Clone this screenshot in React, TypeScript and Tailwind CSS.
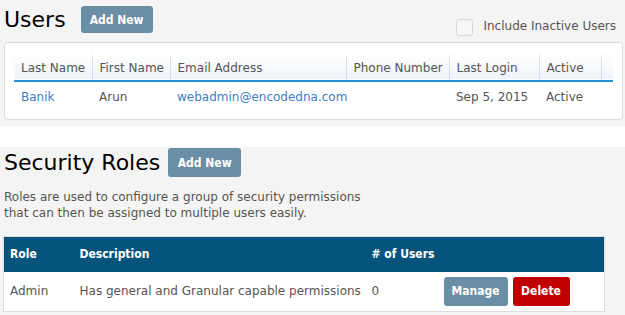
import React from 'react';

const users = [
    { last: 'Banik', first: 'Arun', email: 'webadmin@encodedna.com', phone: '', login: 'Sep 5, 2015', active: 'Active' },
];

const roles = [{ role: 'Admin', description: 'Has general and Granular capable permissions', count: 0 }];

const bold = "font-['DejaVu_Sans_Condensed','DejaVu_Sans',sans-serif] font-bold text-[12px]";

function ActionButton({ label, className }: { label: string; className: string }) {
    return (
        <button className={`rounded-[3px] text-white ${bold} text-[12.5px] ${className}`}>{label}</button>
    );
}

export default function App() {
    return (
        <div className="w-[625px] h-[315px] overflow-hidden bg-white font-['DejaVu_Sans',sans-serif] text-[12px] text-[#555]">
            {/* Users */}
            <section className="bg-[#f4f4f4] h-[126px] pt-[6px] pl-[4px] pr-[2px]">
                <div className="flex items-start h-[36px]">
                    <h1 className="text-[22px] leading-[27px] text-black font-normal">Users</h1>
                    <ActionButton label="Add New" className="ml-[15px] w-[72px] h-[27px] bg-[#6a8ea5]" />
                    <label className="ml-auto mt-[13px] mr-[7px] flex items-center">
                        <span className="w-[17px] h-[17px] rounded-[3px] border border-[#d6d6d6] bg-[#f7f7f7]" />
                        <span className="ml-[10px] leading-[14px] -mt-[4px]">Include Inactive Users</span>
                    </label>
                </div>
                <div className="h-[78px] bg-white border border-[#dcdcdc] rounded-[4px] pt-[12px] px-[9px]">
                    <table className="border-collapse table-fixed w-[599px]">
                        <colgroup>
                            <col className="w-[78px]" />
                            <col className="w-[78px]" />
                            <col className="w-[176px]" />
                            <col className="w-[103px]" />
                            <col className="w-[90px]" />
                            <col className="w-[62px]" />
                            <col className="w-[12px]" />
                        </colgroup>
                        <thead>
                            <tr className="bg-gradient-to-b from-white to-[#eef2f9] border-b-2 border-[#2490d2]">
                                {['Last Name', 'First Name', 'Email Address', 'Phone Number', 'Last Login', 'Active', ''].map((h, i) => (
                                    <th
                                        key={i}
                                        className={`h-[26px] pl-[7px] text-left font-normal whitespace-nowrap ${i < 6 ? 'border-r border-[#d9dee8]' : ''}`}
                                    >
                                        {h}
                                    </th>
                                ))}
                            </tr>
                        </thead>
                        <tbody>
                            {users.map((u) => (
                                <tr key={u.email} className="h-[31px]">
                                    <td className="pl-[7px] text-[#3d7ec4]">{u.last}</td>
                                    <td className="pl-[7px]">{u.first}</td>
                                    <td className="pl-[7px] text-[#3d7ec4]">{u.email}</td>
                                    <td className="pl-[7px]">{u.phone}</td>
                                    <td className="pl-[7px]">{u.login}</td>
                                    <td className="pl-[7px]">{u.active}</td>
                                    <td />
                                </tr>
                            ))}
                        </tbody>
                    </table>
                </div>
            </section>

            <div className="h-[21px]" />

            {/* Security Roles */}
            <section className="bg-[#f4f4f4] h-[168px] pt-[1px] pl-[3px]">
                <div className="flex items-center h-[29px]">
                    <h2 className="pl-[1px] text-[22px] leading-[27px] text-black font-normal">Security Roles</h2>
                    <ActionButton label="Add New" className="ml-[8px] w-[73px] h-[29px] bg-[#6a8ea5]" />
                </div>
                <p className="mt-[12px] pl-[1px] leading-[16px] max-w-[360px]">
                    Roles are used to configure a group of security permissions that can then be assigned to multiple users easily.
                </p>
                <table className="mt-[15px] border-collapse table-fixed w-[602px] border border-[#dcdcdc]">
                    <colgroup>
                        <col className="w-[70px]" />
                        <col className="w-[292px]" />
                        <col className="w-[72px]" />
                        <col />
                    </colgroup>
                    <thead>
                        <tr className="bg-[#06547c] text-white h-[35px]">
                            <th className={`pl-[6px] text-left ${bold}`}>Role</th>
                            <th className={`pl-[6px] text-left ${bold}`}>Description</th>
                            <th className={`pl-[6px] text-left ${bold}`}># of Users</th>
                            <th />
                        </tr>
                    </thead>
                    <tbody>
                        {roles.map((r) => (
                            <tr key={r.role} className="bg-white h-[40px]">
                                <td className="pl-[6px]">{r.role}</td>
                                <td className="pl-[6px] whitespace-nowrap">{r.description}</td>
                                <td className="pl-[6px]">{r.count}</td>
                                <td className="pl-[6px]">
                                    <div className="flex gap-[5px]">
                                        <ActionButton label="Manage" className="w-[64px] h-[29px] bg-[#6a8ea5]" />
                                        <ActionButton label="Delete" className="w-[57px] h-[29px] bg-[#c00000]" />
                                    </div>
                                </td>
                            </tr>
                        ))}
                    </tbody>
                </table>
            </section>
        </div>
    );
}
